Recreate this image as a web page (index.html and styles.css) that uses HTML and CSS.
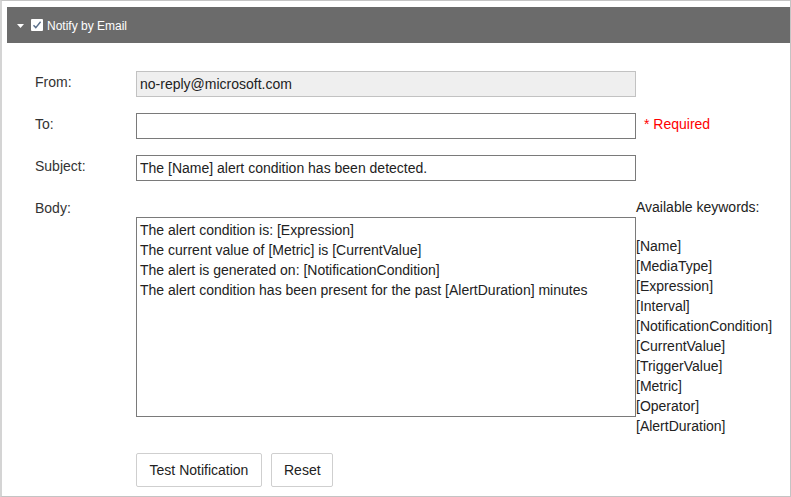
FILE: index.html
```html
<!DOCTYPE html>
<html>
<head>
<meta charset="utf-8">
<link rel="stylesheet" href="styles.css">
</head>
<body>
<div class="frame">
  <div class="header">
    <svg class="caret" width="7" height="4" viewBox="0 0 7 4"><polygon points="0,0 7,0 3.5,4" fill="#fff"/></svg>
    <svg class="check" width="12" height="12" viewBox="0 0 12 12"><rect x="0" y="0" width="12" height="12" rx="1" fill="#fff"/><path d="M2.5 6.2 L4.8 8.6 L9.6 2.8" fill="none" stroke="#5a6f8a" stroke-width="1.4"/></svg>
    <span class="title">Notify by Email</span>
  </div>
  <div class="form">
    <div class="label">From:</div>
    <input class="field disabled" type="text" value="no-reply@microsoft.com" disabled>
    <div class="extra"></div>

    <div class="label">To:</div>
    <input class="field" type="text" value="">
    <div class="extra"><span class="required">* Required</span></div>

    <div class="label">Subject:</div>
    <input class="field" type="text" value="The [Name] alert condition has been detected.">
    <div class="extra"></div>

    <div class="label">Body:</div>
    <textarea class="body">The alert condition is: [Expression]
The current value of [Metric] is [CurrentValue]
The alert is generated on: [NotificationCondition]
The alert condition has been present for the past [AlertDuration] minutes</textarea>
    <div class="keywords">
      <div class="kw-title">Available keywords:</div>
      <ul class="kw-list">
        <li>[Name]</li>
        <li>[MediaType]</li>
        <li>[Expression]</li>
        <li>[Interval]</li>
        <li>[NotificationCondition]</li>
        <li>[CurrentValue]</li>
        <li>[TriggerValue]</li>
        <li>[Metric]</li>
        <li>[Operator]</li>
        <li>[AlertDuration]</li>
      </ul>
    </div>

    <div class="label"></div>
    <div class="buttons">
      <button class="btn btn-test">Test Notification</button>
      <button class="btn btn-reset">Reset</button>
    </div>
    <div class="extra"></div>
  </div>
</div>
</body>
</html>
```
FILE: styles.css
```css
html, body {
  margin: 0;
  padding: 0;
  background: #fff;
}
body {
  font-family: "Liberation Sans", Arial, sans-serif;
  font-size: 14px;
  color: #222;
}
.frame {
  width: 791px;
  height: 497px;
  box-sizing: border-box;
  border-top: 1px solid #c4c4c4;
  border-left: 2px solid #d4d4d4;
  border-right: 1px solid #c4c4c4;
  border-bottom: 1px solid #c4c4c4;
  padding: 6px 0 0 5px;
  overflow: hidden;
}
.header {
  height: 36px;
  background: #6b6b6b;
  display: flex;
  align-items: center;
  padding-left: 10px;
  color: #fff;
}
.caret {
  display: block;
  margin-top: 1px;
}
.check {
  display: block;
  margin-left: 7px;
}
.title {
  margin-left: 4px;
  font-size: 12px;
  line-height: 14px;
  margin-top: 1px;
}
.form {
  display: grid;
  grid-template-columns: 101px 500px auto;
  row-gap: 16px;
  padding: 28px 0 0 28px;
  align-items: start;
}
.label {
  padding-top: 2px;
  line-height: 18px;
  color: #333;
}
.field {
  box-sizing: border-box;
  width: 500px;
  height: 26px;
  margin: 0;
  padding: 0 3px;
  border: 1px solid #7a7a7a;
  font-family: "Liberation Sans", Arial, sans-serif;
  font-size: 14px;
  color: #222;
  background: #fff;
  outline: none;
}
.field.disabled {
  border-color: #c2c2c2;
  background: #efefef;
  color: #222;
}
.extra {
  padding-left: 8px;
}
.required {
  display: block;
  color: #ff0000;
  line-height: 20px;
  padding-top: 1px;
}
.body {
  box-sizing: border-box;
  width: 500px;
  height: 200px;
  margin: 20px 0 0 0;
  padding: 2px 3px;
  border: 1px solid #7a7a7a;
  font-family: "Liberation Sans", Arial, sans-serif;
  font-size: 14px;
  line-height: 20px;
  color: #222;
  resize: none;
  overflow: hidden;
  outline: none;
  display: block;
}
.keywords {
  line-height: 20px;
  color: #222;
  white-space: nowrap;
}
.kw-list {
  list-style: none;
  margin: 19px 0 0 0;
  padding: 0;
}
.buttons {
  display: flex;
  gap: 9px;
  margin-top: 1px;
}
.btn {
  height: 34px;
  box-sizing: border-box;
  margin: 0;
  border: 1px solid #cfcfcf;
  border-radius: 2px;
  background: #fff;
  font-family: "Liberation Sans", Arial, sans-serif;
  font-size: 14px;
  color: #222;
  padding: 0 12px;
}
.btn-test {
  width: 126px;
}
.btn-reset {
  width: 62px;
}
```
